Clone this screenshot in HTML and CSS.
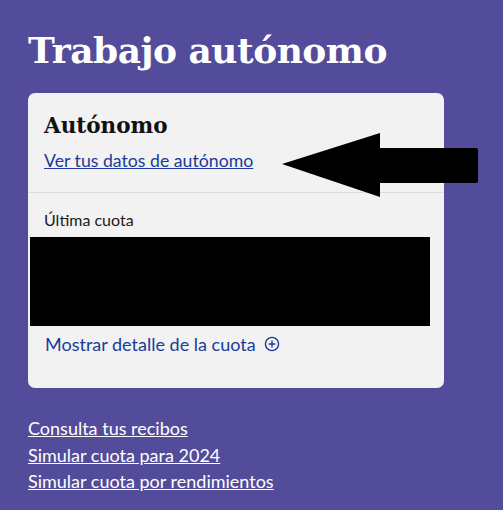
FILE: index.html
```html
<!DOCTYPE html>
<html lang="es">
<head>
    <meta charset="UTF-8">
    <meta name="viewport" content="width=device-width, initial-scale=1.0">
    <title>Trabajo autónomo</title>
    <link rel="stylesheet" href="styles.css">
</head>
<body>
    <main class="page">
        <h1 class="title">Trabajo autónomo</h1>

        <!-- Tarjeta autónomo -->
        <section class="card">
            <div class="card-head">
                <h2>Autónomo</h2>
                <a href="#" class="card-link">Ver tus datos de autónomo</a>
            </div>
            <div class="card-body">
                <div class="label">Última cuota</div>
                <div class="redacted"></div>
                <a href="#" class="detail">Mostrar detalle de la cuota
                    <svg width="16" height="16" viewBox="0 0 16 16">
                        <circle cx="8" cy="8" r="6.6" fill="none" stroke="currentColor" stroke-width="1.4"/>
                        <path d="M8 4.6v6.8M4.6 8h6.8" stroke="currentColor" stroke-width="1.4"/>
                    </svg>
                </a>
            </div>
            <svg class="arrow" width="200" height="68" viewBox="0 0 200 68">
                <path d="M2 32 L100 1 L100 16 L196 16 Q198 16 198 18 L198 49 Q198 51 196 51 L100 51 L100 65 Z" fill="#000"/>
            </svg>
        </section>

        <nav class="links">
            <a href="#">Consulta tus recibos</a>
            <a href="#">Simular cuota para 2024</a>
            <a href="#">Simular cuota por rendimientos</a>
        </nav>
    </main>
</body>
</html>
```

FILE: styles.css
```css
body {
    margin: 0;
    background: #534c9a;
    font-family: Lato, "Open Sans", sans-serif;
    color: #1a1a1a;
}
.page {
    padding: 0 28px;
}
.title {
    font-family: "DejaVu Serif", "Liberation Serif", serif;
    font-weight: bold;
    font-size: 36px;
    line-height: 48px;
    color: white;
    margin: 26px 0 19px;
    letter-spacing: -0.5px;
}
.card {
    position: relative;
    width: 416px;
    background: #f2f2f2;
    border-radius: 7px;
    padding-bottom: 31px;
}
.card-head {
    padding: 18px 16px 19px;
    border-bottom: 1px solid #dcdcdc;
}
.card-head h2 {
    font-family: "DejaVu Serif", "Liberation Serif", serif;
    font-size: 21.5px;
    line-height: 30px;
    margin: 0 0 8px;
    color: #111;
}
.card-link {
    font-size: 17.7px;
    line-height: 24px;
    color: #1b3a9c;
}
.card-body {
    padding-top: 17px;
}
.label {
    font-size: 16px;
    line-height: 20px;
    padding-left: 16px;
    margin-bottom: 7px;
}
.redacted {
    margin-left: 2px;
    width: 400px;
    height: 89px;
    background: #000;
}
.detail {
    display: flex;
    align-items: center;
    gap: 8px;
    margin: 5px 0 0 17px;
    font-size: 18px;
    line-height: 26px;
    color: #1b3a9c;
    text-decoration: none;
}
.arrow {
    position: absolute;
    left: 252px;
    top: 39px;
}
.links {
    display: flex;
    flex-direction: column;
    align-items: flex-start;
    margin-top: 27px;
}
.links a {
    font-size: 18px;
    line-height: 26.5px;
    color: white;
}
```
